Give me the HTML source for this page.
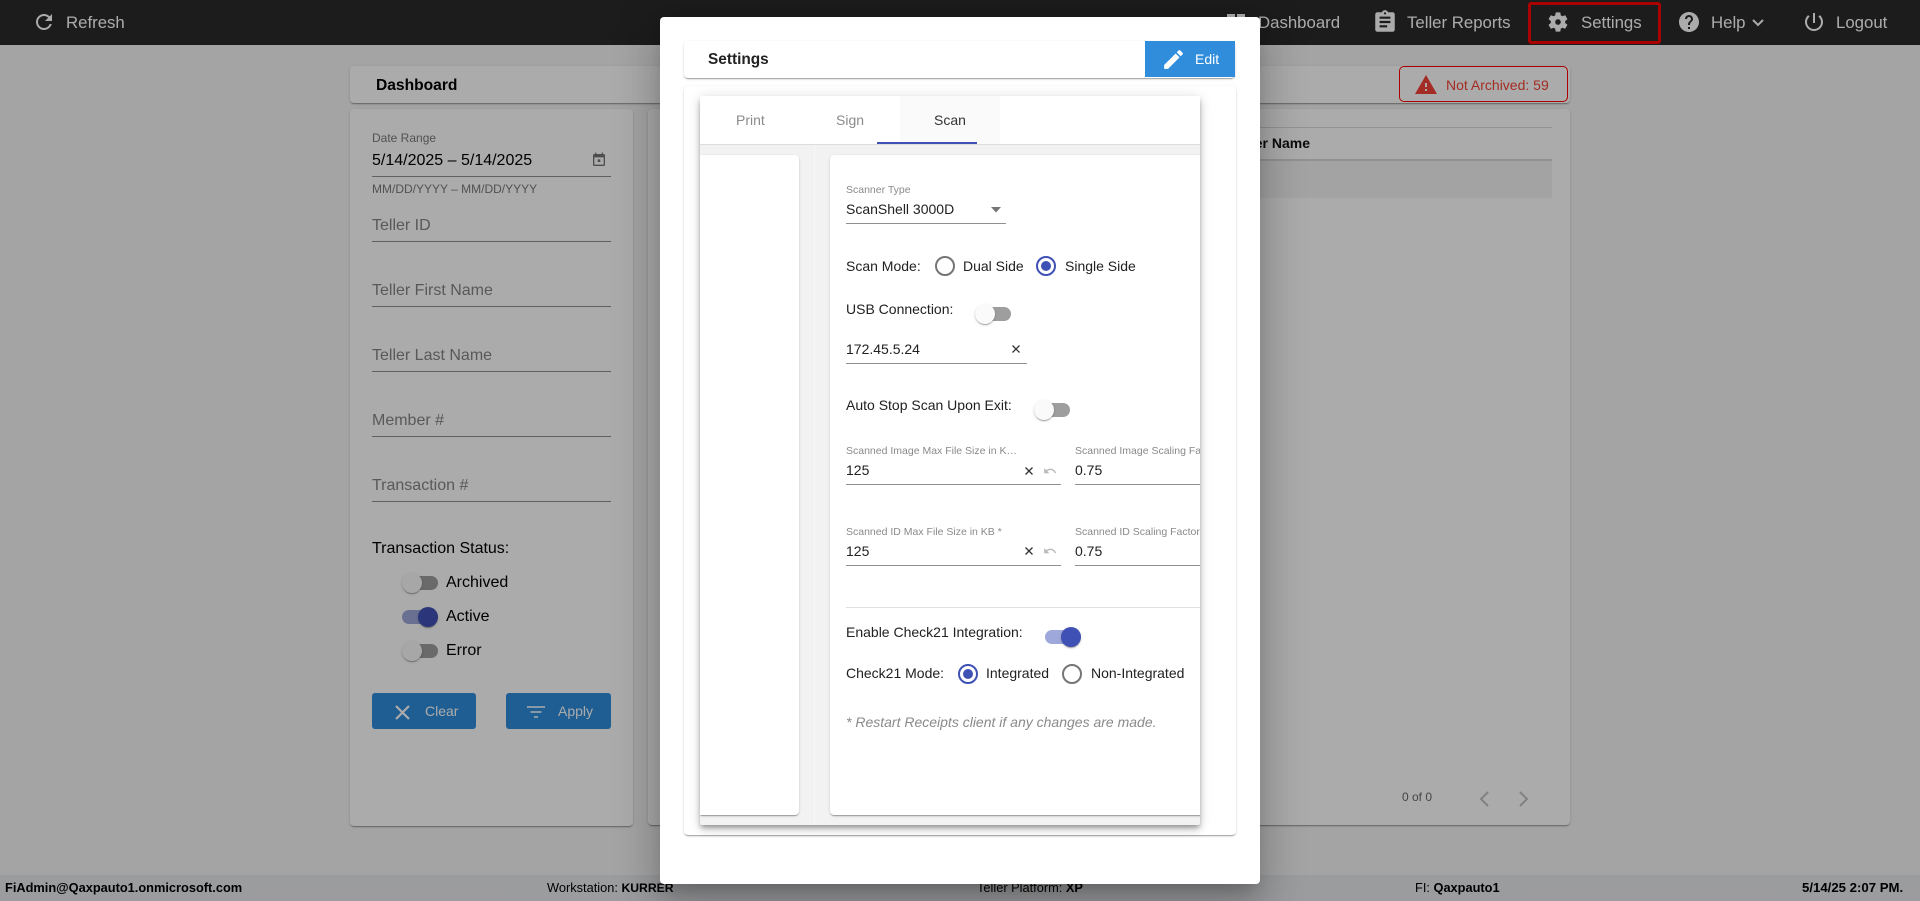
<!DOCTYPE html>
<html lang="en">
<head>
<meta charset="utf-8">
<title>Settings</title>
<style>
html,body{margin:0;padding:0;width:1920px;height:901px;overflow:hidden;background:#f5f5f5}
body{font-family:"Liberation Sans",Arial,sans-serif;position:relative}
.a{position:absolute}
.t{position:absolute;white-space:nowrap;line-height:20px;height:20px}
.l{position:absolute;height:1px;background:#909090}
svg{position:absolute;display:block}
.nav{color:#fff;font-size:16.8px}
.nv{fill:#fff}
.card{position:absolute;background:#fff;border-radius:4px;box-shadow:0 2px 1px -1px rgba(0,0,0,.2),0 1px 1px 0 rgba(0,0,0,.14),0 1px 3px 0 rgba(0,0,0,.12)}
.ph{font-size:16px;color:#858585}
.f12{font-size:12px;color:#7a7a7a}
.k{font-size:16px;color:#000}
.tr{position:absolute;width:36px;height:14px;border-radius:7px;background:#9e9e9e}
.tr i{position:absolute;top:-3px;left:0;width:20px;height:20px;border-radius:50%;background:#fafafa;box-shadow:0 2px 1px -1px rgba(0,0,0,.2),0 1px 1px 0 rgba(0,0,0,.14),0 1px 3px 0 rgba(0,0,0,.12)}
.tr.on{background:#9fa8da}
.tr.on i{left:16px;background:#3f51b5}
.btn{position:absolute;background:#2f8ddc;border-radius:3px;color:#fff;font-size:14px}
.m{font-size:14px;color:#212121}
.s{font-size:10.5px;color:#8a8a8a}
.r{position:absolute;width:16px;height:16px;border:2px solid #757575;border-radius:50%}
.r.on{border-color:#3f51b5}
.r.on i{position:absolute;left:3px;top:3px;width:10px;height:10px;border-radius:50%;background:#3f51b5}
.f{font-size:12.8px;color:#000}
#ov{position:absolute;left:0;top:0;width:1920px;height:901px;background:rgba(0,0,0,.33)}
#md{position:absolute;left:660px;top:17px;width:600px;height:867px;background:#fff;border-radius:4px;box-shadow:0 11px 15px -7px rgba(0,0,0,.2),0 24px 38px 3px rgba(0,0,0,.14),0 9px 46px 8px rgba(0,0,0,.12)}
</style>
</head>
<body>
<!-- top bar -->
<div class="a" style="left:0;top:0;width:1920px;height:45px;background:#2a2a2a"></div>
<svg style="left:32px;top:10px" width="24" height="24" viewBox="0 0 24 24"><path class="nv" d="M17.65 6.35C16.2 4.9 14.21 4 12 4c-4.42 0-7.99 3.58-7.99 8s3.57 8 7.99 8c3.73 0 6.84-2.55 7.73-6h-2.08c-.82 2.33-3.04 4-5.65 4-3.31 0-6-2.69-6-6s2.69-6 6-6c1.66 0 3.14.69 4.22 1.78L13 11h7V4l-2.35 2.35z"/></svg>
<div class="t nav" style="left:66px;top:13px">Refresh</div>
<svg style="left:1224px;top:11px" width="24" height="24" viewBox="0 0 24 24"><path class="nv" d="M3 13h8V3H3v10zm0 8h8v-6H3v6zm10 0h8V11h-8v10zm0-18v6h8V3h-8z"/></svg>
<div class="t nav" style="left:1258px;top:13px">Dashboard</div>
<svg style="left:1372px;top:9px" width="26" height="26" viewBox="0 0 24 24"><path class="nv" d="M19 3h-4.18C14.4 1.84 13.3 1 12 1c-1.3 0-2.4.84-2.82 2H5c-1.1 0-2 .9-2 2v14c0 1.1.9 2 2 2h14c1.1 0 2-.9 2-2V5c0-1.1-.9-2-2-2zm-7 0c.55 0 1 .45 1 1s-.45 1-1 1-1-.45-1-1 .45-1 1-1zm2 14H7v-2h7v2zm3-4H7v-2h10v2zm0-4H7V7h10v2z"/></svg>
<div class="t nav" style="left:1407px;top:13px">Teller Reports</div>
<div class="a" style="left:1528px;top:2px;width:127px;height:36px;border:3px solid #ff0000;border-radius:3px"></div>
<svg style="left:1546px;top:10px" width="24" height="24" viewBox="0 0 24 24"><path class="nv" d="M19.14 12.94c.04-.3.06-.61.06-.94 0-.32-.02-.64-.07-.94l2.03-1.58c.18-.14.23-.41.12-.61l-1.92-3.32c-.12-.22-.37-.29-.59-.22l-2.39.96c-.5-.38-1.03-.7-1.62-.94l-.36-2.54c-.04-.24-.24-.41-.48-.41h-3.84c-.24 0-.43.17-.47.41l-.36 2.54c-.59.24-1.13.57-1.62.94l-2.39-.96c-.22-.08-.47 0-.59.22L2.74 8.87c-.12.21-.08.47.12.61l2.03 1.58c-.05.3-.09.63-.09.94s.02.64.07.94l-2.03 1.58c-.18.14-.23.41-.12.61l1.92 3.32c.12.22.37.29.59.22l2.39-.96c.5.38 1.03.7 1.62.94l.36 2.54c.05.24.24.41.48.41h3.84c.24 0 .44-.17.47-.41l.36-2.54c.59-.24 1.13-.56 1.62-.94l2.39.96c.22.08.47 0 .59-.22l1.92-3.32c.12-.22.07-.47-.12-.61l-2.01-1.58zM12 14.800c-1.540 0-2.800-1.260-2.800-2.800s1.260-2.800 2.800-2.800 2.800 1.260 2.800 2.800-1.260 2.800-2.800 2.800z"/></svg>
<div class="t nav" style="left:1581px;top:13px">Settings</div>
<svg style="left:1677px;top:10px" width="24" height="24" viewBox="0 0 24 24"><path class="nv" d="M12 2C6.48 2 2 6.48 2 12s4.48 10 10 10 10-4.48 10-10S17.52 2 12 2zm1 17h-2v-2h2v2zm2.07-7.75l-.9.92C13.45 12.9 13 13.5 13 15h-2v-.5c0-1.1.45-2.1 1.17-2.83l1.24-1.26c.37-.36.59-.86.59-1.41 0-1.1-.9-2-2-2s-2 .9-2 2H8c0-2.21 1.79-4 4-4s4 1.79 4 4c0 .88-.36 1.68-.93 2.25z"/></svg>
<div class="t nav" style="left:1711px;top:13px">Help</div>
<svg style="left:1751px;top:18px" width="14" height="10" viewBox="0 0 14 10"><path d="M2 2l5 5 5-5" fill="none" stroke="#fff" stroke-width="2"/></svg>
<svg style="left:1802px;top:10px" width="24" height="24" viewBox="0 0 24 24"><path class="nv" d="M13 3h-2v10h2V3zm4.83 2.17l-1.42 1.42C17.99 7.86 19 9.81 19 12c0 3.87-3.13 7-7 7s-7-3.13-7-7c0-2.19 1.01-4.14 2.58-5.42L6.17 5.17C4.23 6.82 3 9.26 3 12c0 4.97 4.03 9 9 9s9-4.03 9-9c0-2.74-1.23-5.18-3.17-6.83z"/></svg>
<div class="t nav" style="left:1836px;top:13px">Logout</div>

<!-- dashboard header -->
<div class="card" style="left:350px;top:66px;width:1220px;height:37px"></div>
<div class="t" style="left:376px;top:76px;font-size:15.6px;font-weight:bold;color:#000">Dashboard</div>
<div class="a" style="left:1399px;top:66px;width:167px;height:34px;border:1.5px solid #ff0000;border-radius:5px;background:#fff"></div>
<svg style="left:1414px;top:73px" width="24" height="24" viewBox="0 0 24 24"><path fill="#f44336" d="M1 21h22L12 2 1 21zm12-3h-2v-2h2v2zm0-4h-2v-4h2v4z"/></svg>
<div class="t" style="left:1446px;top:75px;font-size:14px;color:#f44336">Not Archived: 59</div>

<!-- filter card -->
<div class="card" style="left:350px;top:109px;width:283px;height:717px"></div>
<div class="t f12" style="left:372px;top:128px">Date Range</div>
<div class="t k" style="left:372px;top:151px">5/14/2025 – 5/14/2025</div>
<svg style="left:591px;top:152px" width="16" height="16" viewBox="0 0 24 24"><path fill="#757575" d="M19 3h-1V1h-2v2H8V1H6v2H5c-1.1 0-2 .9-2 2v14c0 1.1.9 2 2 2h14c1.1 0 2-.9 2-2V5c0-1.1-.9-2-2-2zm0 16H5V8h14v11zM10 11h4v4h-4z"/></svg>
<div class="l" style="left:372px;top:176px;width:239px"></div>
<div class="t f12" style="left:372px;top:179px">MM/DD/YYYY – MM/DD/YYYY</div>
<div class="t ph" style="left:372px;top:216px">Teller ID</div>
<div class="l" style="left:372px;top:241px;width:239px"></div>
<div class="t ph" style="left:372px;top:281px">Teller First Name</div>
<div class="l" style="left:372px;top:306px;width:239px"></div>
<div class="t ph" style="left:372px;top:346px">Teller Last Name</div>
<div class="l" style="left:372px;top:371px;width:239px"></div>
<div class="t ph" style="left:372px;top:411px">Member #</div>
<div class="l" style="left:372px;top:436px;width:239px"></div>
<div class="t ph" style="left:372px;top:476px">Transaction #</div>
<div class="l" style="left:372px;top:501px;width:239px"></div>
<div class="t k" style="left:372px;top:539px">Transaction Status:</div>
<div class="tr" style="left:402px;top:576px"><i></i></div>
<div class="t k" style="left:446px;top:573px">Archived</div>
<div class="tr on" style="left:402px;top:610px;background:#9fa8da"><i></i></div>
<div class="t k" style="left:446px;top:607px">Active</div>
<div class="tr" style="left:402px;top:644px"><i></i></div>
<div class="t k" style="left:446px;top:641px">Error</div>
<div class="btn" style="left:372px;top:693px;width:104px;height:36px"></div>
<svg style="left:395px;top:705px" width="15" height="15" viewBox="0 0 15 15"><path d="M1 1l13 13M14 1L1 14" stroke="#fff" stroke-width="2.2" fill="none"/></svg>
<div class="t" style="left:425px;top:701px;font-size:14px;color:#fff">Clear</div>
<div class="btn" style="left:506px;top:693px;width:105px;height:36px"></div>
<svg style="left:526px;top:705px" width="20" height="14" viewBox="0 0 20 14"><path d="M1 2h18M4.5 7h11M8 12h4" stroke="#fff" stroke-width="1.6" fill="none"/></svg>
<div class="t" style="left:558px;top:701px;font-size:14px;color:#fff">Apply</div>

<!-- table card -->
<div class="card" style="left:648px;top:109px;width:922px;height:716px"></div>
<div class="a" style="left:660px;top:127px;width:892px;height:1px;background:#dcdcdc"></div>
<div class="t" style="right:610px;top:133px;font-size:14px;font-weight:bold;color:#111">Teller Name</div>
<div class="a" style="left:660px;top:159px;width:892px;height:2px;background:#d8d8d8"></div>
<div class="a" style="left:660px;top:161px;width:892px;height:37px;background:#f4f4f4"></div>
<div class="t" style="left:1402px;top:787px;font-size:12px;color:#666">0 of 0</div>
<svg style="left:1476px;top:789px" width="16" height="20" viewBox="0 0 16 20"><path d="M12 3l-7 7 7 7" fill="none" stroke="#c0c0c0" stroke-width="2"/></svg>
<svg style="left:1516px;top:789px" width="16" height="20" viewBox="0 0 16 20"><path d="M4 3l7 7-7 7" fill="none" stroke="#c0c0c0" stroke-width="2"/></svg>

<!-- footer -->
<div class="a" style="left:0;top:875px;width:1920px;height:26px;background:#e8e9ec"></div>
<div class="t f" style="left:5px;top:878px;font-weight:bold">FiAdmin@Qaxpauto1.onmicrosoft.com</div>
<div class="t f" style="left:547px;top:878px">Workstation: <b style="font-size:12.2px">KURRER</b></div>
<div class="t f" style="left:977px;top:878px">Teller Platform: <b>XP</b></div>
<div class="t f" style="left:1415px;top:878px">FI: <b>Qaxpauto1</b></div>
<div class="t f" style="left:1802px;top:878px;font-weight:bold;font-size:13.2px">5/14/25 2:07 PM.</div>

<div id="ov"></div>
<div id="md"></div>

<!-- modal contents -->
<div class="card" style="left:684px;top:41px;width:551px;height:37px"></div>
<div class="t" style="left:708px;top:50px;font-size:15.4px;font-weight:bold;color:#222">Settings</div>
<div class="a" style="left:1145px;top:41px;width:90px;height:36px;background:#2f8ddc"></div>
<svg style="left:1161px;top:47px" width="25" height="25" viewBox="0 0 24 24"><path fill="#fff" d="M3 17.25V21h3.75L17.81 9.94l-3.75-3.75L3 17.25zM20.71 7.04c.39-.39.39-1.02 0-1.41l-2.34-2.34c-.39-.39-1.02-.39-1.41 0l-1.83 1.83 3.75 3.75 1.83-1.83z"/></svg>
<div class="t" style="left:1195px;top:49px;font-size:14px;color:#fff">Edit</div>

<div class="card" style="left:684px;top:86px;width:552px;height:749px"></div>
<div class="a" style="left:700px;top:96px;width:500px;height:729px;background:#f2f2f2;border-radius:2px;box-shadow:0 3px 5px -1px rgba(0,0,0,.3),0 5px 8px 0 rgba(0,0,0,.14),0 1px 14px 0 rgba(0,0,0,.12)"></div>

<div class="a" style="left:0;top:0;width:1200px;height:901px;overflow:hidden">
  <div class="a" style="left:700px;top:96px;width:500px;height:48px;background:#fff;border-radius:2px 2px 0 0"></div>
  <div class="a" style="left:700px;top:144px;width:500px;height:1px;background:#dedede"></div>
  <div class="a" style="left:900px;top:96px;width:100px;height:48px;background:#fafafa"></div>
  <div class="a" style="left:877px;top:142px;width:100px;height:2px;background:#3f51b5"></div>
  <div class="t" style="left:736px;top:110px;font-size:14px;color:#8a8a8a">Print</div>
  <div class="t" style="left:836px;top:110px;font-size:14px;color:#8a8a8a">Sign</div>
  <div class="t" style="left:934px;top:110px;font-size:14px;color:#333">Scan</div>

  <div class="a" style="left:814px;top:145px;width:1px;height:680px;background:#f8f8f8"></div>
  <div class="card" style="left:700px;top:155px;width:99px;height:660px;border-radius:0 4px 4px 0;clip-path:inset(-5px -5px -5px 0)"></div>
  <div class="card" style="left:830px;top:155px;width:380px;height:660px"></div>

  <div class="t s" style="left:846px;top:180px">Scanner Type</div>
  <div class="t m" style="left:846px;top:199px">ScanShell 3000D</div>
  <svg style="left:991px;top:207px" width="10" height="6" viewBox="0 0 10 6"><path d="M0 0h10L5 5.500z" fill="#757575"/></svg>
  <div class="l" style="left:846px;top:223px;width:160px"></div>

  <div class="t m" style="left:846px;top:256px">Scan Mode:</div>
  <div class="r" style="left:935px;top:256px"></div>
  <div class="t m" style="left:963px;top:256px">Dual Side</div>
  <div class="r on" style="left:1036px;top:256px"><i></i></div>
  <div class="t m" style="left:1065px;top:256px">Single Side</div>

  <div class="t m" style="left:846px;top:299px">USB Connection:</div>
  <div class="tr" style="left:975px;top:307px"><i></i></div>
  <div class="t m" style="left:846px;top:339px">172.45.5.24</div>
  <svg style="left:1012px;top:345px" width="8" height="8" viewBox="0 0 8 8"><path d="M.5.500l7 7M7.500.500l-7 7" stroke="#333" stroke-width="1.300" fill="none"/></svg>
  <div class="l" style="left:846px;top:363px;width:181px"></div>

  <div class="t m" style="left:846px;top:395px">Auto Stop Scan Upon Exit:</div>
  <div class="tr" style="left:1034px;top:403px"><i></i></div>

  <div class="t s" style="left:846px;top:441px">Scanned Image Max File Size in K…</div>
  <div class="t m" style="left:846px;top:460px">125</div>
  <svg style="left:1025px;top:467px" width="8" height="8" viewBox="0 0 8 8"><path d="M.5.500l7 7M7.500.500l-7 7" stroke="#333" stroke-width="1.300" fill="none"/></svg>
  <svg style="left:1043px;top:464px" width="14" height="14" viewBox="0 0 24 24"><path fill="#bbb" d="M12.500 8c-2.650 0-5.050.990-6.900 2.600L2 7v9h9l-3.620-3.620c1.390-1.160 3.160-1.880 5.120-1.880 3.540 0 6.550 2.310 7.600 5.500l2.370-.780C21.080 11.030 17.150 8 12.500 8z"/></svg>
  <div class="l" style="left:846px;top:484px;width:215px"></div>
  <div class="t s" style="left:1075px;top:441px">Scanned Image Scaling Factor *</div>
  <div class="t m" style="left:1075px;top:460px">0.75</div>
  <div class="l" style="left:1075px;top:484px;width:125px"></div>

  <div class="t s" style="left:846px;top:522px">Scanned ID Max File Size in KB *</div>
  <div class="t m" style="left:846px;top:541px">125</div>
  <svg style="left:1025px;top:547px" width="8" height="8" viewBox="0 0 8 8"><path d="M.5.500l7 7M7.500.500l-7 7" stroke="#333" stroke-width="1.300" fill="none"/></svg>
  <svg style="left:1043px;top:544px" width="14" height="14" viewBox="0 0 24 24"><path fill="#bbb" d="M12.500 8c-2.650 0-5.050.990-6.900 2.600L2 7v9h9l-3.620-3.620c1.390-1.160 3.160-1.880 5.120-1.880 3.540 0 6.550 2.310 7.600 5.500l2.370-.780C21.080 11.030 17.150 8 12.500 8z"/></svg>
  <div class="l" style="left:846px;top:565px;width:215px"></div>
  <div class="t s" style="left:1075px;top:522px">Scanned ID Scaling Factor *</div>
  <div class="t m" style="left:1075px;top:541px">0.75</div>
  <div class="l" style="left:1075px;top:565px;width:125px"></div>

  <div class="a" style="left:846px;top:607px;width:354px;height:1px;background:#e0e0e0"></div>
  <div class="t m" style="left:846px;top:622px">Enable Check21 Integration:</div>
  <div class="tr on" style="left:1045px;top:630px"><i></i></div>
  <div class="t m" style="left:846px;top:663px">Check21 Mode:</div>
  <div class="r on" style="left:958px;top:664px"><i></i></div>
  <div class="t m" style="left:986px;top:663px">Integrated</div>
  <div class="r" style="left:1062px;top:664px"></div>
  <div class="t m" style="left:1091px;top:663px">Non-Integrated</div>
  <div class="t" style="left:846px;top:712px;font-size:14px;font-style:italic;color:#8a8a8a">* Restart Receipts client if any changes are made.</div>
</div>
</body>
</html>
